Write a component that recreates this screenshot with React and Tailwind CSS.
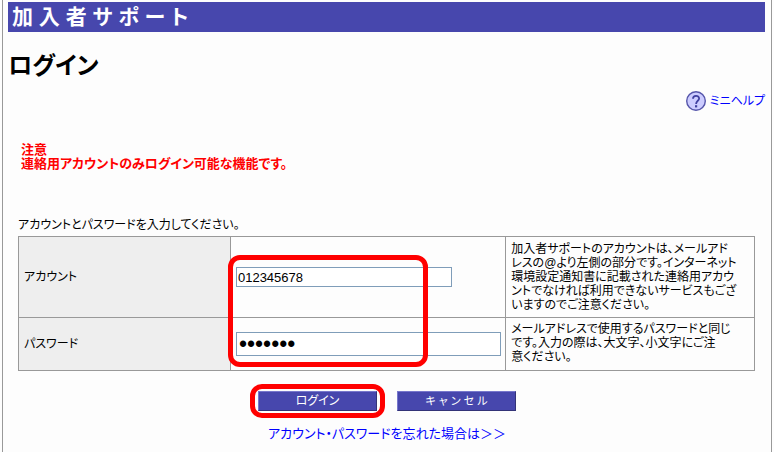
const Header = () => {
  return (
    <header className="bg-[#4747ad] h-[30px] px-1 flex items-center">
      <p className="text-white text-[21px] leading-[30px] font-bold">
        加 入 者 サ ポ ー ト
      </p>
    </header>
  );
};

const HelpIcon = () => {
  return (
    <svg width="20" height="20" viewBox="0 0 20 20" aria-hidden="true">
      <circle cx="10" cy="10" r="9.3" fill="#ccccff" stroke="#5555aa" strokeWidth="1.4" />
      <path
        d="M7 7.8 C7 3.9 13.1 3.9 13.1 7.4 C13.1 9.8 10.1 9.8 10.1 13"
        fill="none"
        stroke="#4040a0"
        strokeWidth="1.8"
      />
      <rect x="9" y="14.2" width="2.2" height="2.2" fill="#4040a0" />
    </svg>
  );
};

const LoginForm = () => {
  return (
    <form onSubmit={(e) => e.preventDefault()}>
      <div className="ml-[15px] mr-4">
        <p className="mb-1">アカウントとパスワードを入力してください。</p>
        <table className="w-full table-fixed border-collapse">
          <tbody>
            {/* Account */}
            <tr className="h-[81px]">
              <th className="w-[28.8%] border border-[#999999] bg-[#eeeeee] px-[5px] text-left font-normal">
                <label htmlFor="account">アカウント</label>
              </th>
              <td className="relative w-[37.4%] border border-[#999999] px-[5px]">
                <input
                  id="account"
                  type="text"
                  defaultValue="012345678"
                  className="block h-5 w-[216px] border border-[#7f9db9] bg-white px-px text-[13px]"
                />
                <span className="pointer-events-none absolute -left-[3px] top-[18px] h-[112px] w-[200px] rounded-xl border-5 border-[#ff0000]"></span>
              </td>
              <td className="border border-[#999999] px-[5px] whitespace-nowrap">
                加入者サポートのアカウントは、メールアド
                <br />
                レスの@より左側の部分です。インターネット
                <br />
                環境設定通知書に記載された連絡用アカウ
                <br />
                ントでなければ利用できないサービスもござ
                <br />
                いますのでご注意ください。
              </td>
            </tr>

            {/* Password */}
            <tr className="h-[53px]">
              <th className="border border-[#999999] bg-[#eeeeee] px-[5px] text-left font-normal">
                <label htmlFor="password">パスワード</label>
              </th>
              <td className="border border-[#999999] pr-1 pl-[5px]">
                <input
                  id="password"
                  type="password"
                  defaultValue="1234567"
                  className="block h-6 w-full border border-[#7f9db9] bg-white px-[2px] text-[23px]"
                />
              </td>
              <td className="border border-[#999999] px-[5px] pt-1 align-top whitespace-nowrap">
                メールアドレスで使用するパスワードと同じ
                <br />
                です。入力の際は、大文字、小文字にご注
                <br />
                意ください。
              </td>
            </tr>
          </tbody>
        </table>
      </div>

      {/* Buttons */}
      <div className="mt-5 flex justify-center gap-5">
        <div className="relative">
          <button
            type="submit"
            className="block h-5 w-[119px] border border-t-[#7777cc] border-l-[#7777cc] border-r-[#333377] border-b-[#333377] bg-[#4747ad] text-[12px] text-white"
          >
            ログイン
          </button>
          <span className="pointer-events-none absolute -inset-x-2 -inset-y-[7px] rounded-xl border-5 border-[#ff0000]"></span>
        </div>
        <button
          type="button"
          className="block h-5 w-[119px] border border-t-[#7777cc] border-l-[#7777cc] border-r-[#333377] border-b-[#333377] bg-[#4747ad] text-[11px] text-white"
        >
          キ ャ ン セ ル
        </button>
      </div>

      <p className="mt-4 text-center text-[13px]">
        <a href="#forgot" className="text-[#0000ff]">
          アカウント・パスワードを忘れた場合は＞＞
        </a>
      </p>
    </form>
  );
};

const App = () => {
  return (
    <div className="min-h-screen bg-[#fdfdfd] px-[2px] font-['Liberation_Sans','Noto_Sans_CJK_JP',sans-serif] text-[12px] leading-[14px] text-black [font-feature-settings:'palt']">
      <div className="min-h-screen border-x border-[#999999] pt-[2px]">
        <div className="ml-[5px] mr-[6px]">
          <Header />
          <h1 className="mt-5 text-[24px] leading-7 font-bold">ログイン</h1>
          <div className="mt-[11px] flex justify-end">
            <a href="#help" className="flex items-center gap-1 text-[#0000ff]">
              <HelpIcon />
              ミニヘルプ
            </a>
          </div>
        </div>

        <div className="mt-8 mb-[47px] ml-[18px] text-[13px] leading-[14px] font-bold text-[#ff0000]">
          <p>注意</p>
          <p>連絡用アカウントのみログイン可能な機能です。</p>
        </div>

        <LoginForm />
      </div>
    </div>
  );
};

export default App;
